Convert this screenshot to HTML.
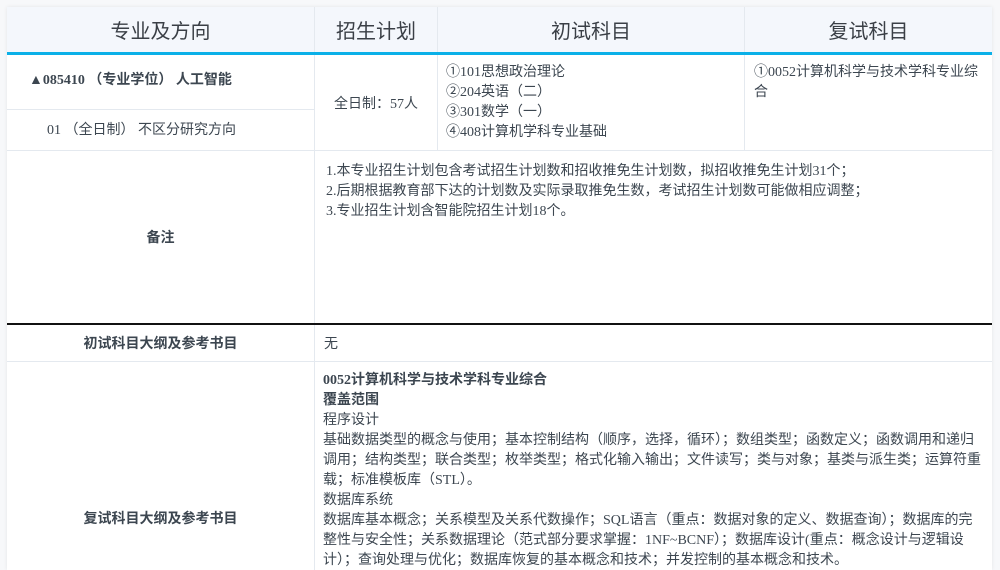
<!DOCTYPE html>
<html><head><meta charset="utf-8"><style>
html,body{margin:0;width:1000px;height:570px;overflow:hidden}
body{background:#f7f8fa;font-family:"Liberation Serif","Noto Sans CJK SC",sans-serif;color:#3c4650;font-size:14px}
.t{position:absolute;left:7px;top:7px;width:985px;height:563px;background:#fff;box-shadow:0 0 4px rgba(0,0,0,.08);overflow:hidden}
.a{position:absolute;box-sizing:border-box}
.h{background:#f4f7fc;height:45px;top:0;font-size:20px;display:flex;align-items:center;justify-content:center;color:#3a3f46;font-family:"Liberation Sans","Noto Sans CJK SC",sans-serif;border-right:1px solid #e4e9ef}
.bl{border-right:1px solid #e4e9ef}
.bb{border-bottom:1px solid #e4e9ef}
.c{display:flex;align-items:center;justify-content:center}
p{margin:0}
</style></head><body>
<div class="t">
<div class="a h" style="left:0;width:308px">专业及方向</div>
<div class="a h" style="left:308px;width:123px">招生计划</div>
<div class="a h" style="left:431px;width:307px">初试科目</div>
<div class="a h" style="left:738px;width:247px;border-right:0">复试科目</div>
<div class="a" style="left:0;top:45px;width:985px;height:3px;background:#0ab0e8"></div>

<div class="a bl bb" style="left:0;top:48px;width:308px;height:55px;padding:14px 0 0 22px;font-weight:bold">▲085410 （专业学位） 人工智能</div>
<div class="a bl bb" style="left:0;top:103px;width:308px;height:41px;padding:9px 0 0 40px">01 （全日制） 不区分研究方向</div>
<div class="a bl bb c" style="left:308px;top:48px;width:123px;height:96px">全日制：57人</div>
<div class="a bl bb" style="left:431px;top:48px;width:307px;height:96px;padding:8px 0 0 8px;line-height:20px">①101思想政治理论<br>②204英语（二）<br>③301数学（一）<br>④408计算机学科专业基础</div>
<div class="a bb" style="left:738px;top:48px;width:247px;height:96px;padding:8px 10px 0 9px;line-height:20px">①0052计算机科学与技术学科专业综合</div>

<div class="a bl c" style="left:0;top:144px;width:308px;height:172px;font-weight:bold">备注</div>
<div class="a" style="left:308px;top:144px;width:677px;height:172px;padding:11px 0 0 11px;line-height:20px">1.本专业招生计划包含考试招生计划数和招收推免生计划数，拟招收推免生计划31个；<br>2.后期根据教育部下达的计划数及实际录取推免生数，考试招生计划数可能做相应调整；<br>3.专业招生计划含智能院招生计划18个。</div>
<div class="a" style="left:0;top:316px;width:985px;height:2px;background:#111"></div>

<div class="a bl bb c" style="left:0;top:318px;width:308px;height:37px;font-weight:bold">初试科目大纲及参考书目</div>
<div class="a bb" style="left:308px;top:318px;width:677px;height:37px;padding:8px 0 0 9px">无</div>

<div class="a bl c" style="left:0;top:355px;width:308px;height:312px;font-weight:bold">复试科目大纲及参考书目</div>
<div class="a" style="left:308px;top:355px;width:677px;height:208px;overflow:hidden;padding:9px 8px 0 8px;line-height:20px">
<p style="font-weight:bold">0052计算机科学与技术学科专业综合</p>
<p style="font-weight:bold">覆盖范围</p>
<p>程序设计</p>
<p>基础数据类型的概念与使用；基本控制结构（顺序，选择，循环）；数组类型；函数定义；函数调用和递归调用；结构类型；联合类型；枚举类型；格式化输入输出；文件读写；类与对象；基类与派生类；运算符重载；标准模板库（STL）。</p>
<p>数据库系统</p>
<p>数据库基本概念；关系模型及关系代数操作；SQL语言（重点：数据对象的定义、数据查询）；数据库的完整性与安全性；关系数据理论（范式部分要求掌握：1NF~BCNF）；数据库设计(重点：概念设计与逻辑设计）；查询处理与优化；数据库恢复的基本概念和技术；并发控制的基本概念和技术。</p>
</div>
</div>
</body></html>
